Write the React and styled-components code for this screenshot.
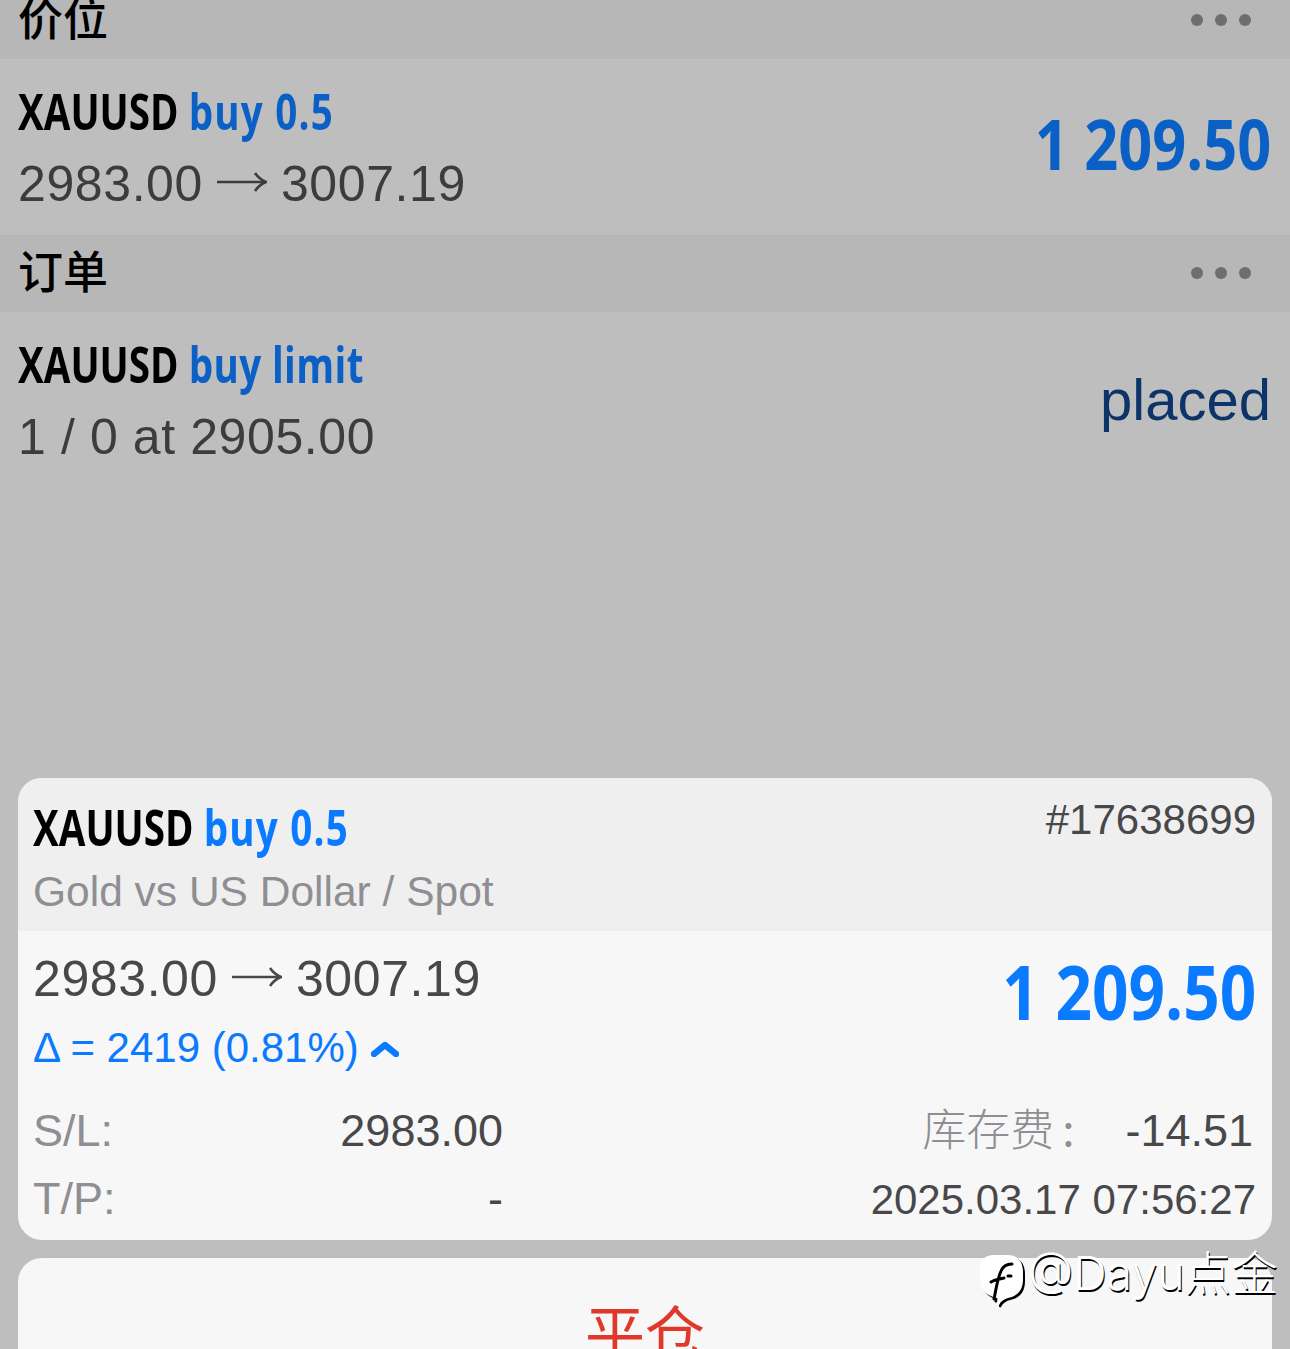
import React from "react";
import styled, { createGlobalStyle } from "styled-components";

const sans = `"Liberation Sans", Arial, "Noto Sans CJK SC", sans-serif`;
const condensed = `"Open Sans", "Noto Sans CJK SC", sans-serif`;

const GlobalStyle = createGlobalStyle`
  html, body {
    margin: 0;
    padding: 0;
    background: #bebebe;
  }
  * {
    box-sizing: border-box;
  }
`;

const Page = styled.div`
  width: 1290px;
  height: 1349px;
  position: relative;
  overflow: hidden;
  background: #bebebe;
  font-family: ${sans};
`;

const Sheet = styled.div`
  margin-top: -18px;
  display: flex;
  flex-direction: column;
`;

const SectionHead = styled.div`
  height: 77px;
  padding: 0 39px 0 18px;
  background: #b7b7b7;
  display: flex;
  align-items: center;
  justify-content: space-between;
`;

const SectionTitle = styled.div`
  font-family: "Noto Sans CJK SC", sans-serif;
  font-size: 45px;
  font-weight: 500;
  color: #000;
  margin-top: -8px;
`;

const Dots = styled.div`
  display: flex;
  gap: 12px;
  margin-top: -1px;
  i {
    width: 12px;
    height: 12px;
    border-radius: 50%;
    background: #6e6e6e;
  }
`;

const TradeRow = styled.div`
  height: ${(p) => p.$h}px;
  padding: 0 19px 0 18px;
  display: flex;
  justify-content: space-between;
  align-items: flex-start;
`;

const TradeInfo = styled.div`
  margin-top: 22px;
`;

const Name = styled.div`
  font-family: ${condensed};
  font-weight: 700;
  font-size: 51px;
  line-height: 58px;
  color: #000;
  white-space: nowrap;
  transform: scaleX(0.757);
  transform-origin: left center;
  span {
    letter-spacing: ${(p) => p.$track}px;
    color: ${(p) => p.$blue};
  }
`;

const Prices = styled.div`
  font-size: 50px;
  line-height: 58px;
  letter-spacing: 0.6px;
  color: ${(p) => p.$color};
  white-space: nowrap;
  margin-top: ${(p) => p.$top || 0}px;
`;

const ArrowMark = styled.svg`
  width: 50px;
  height: 20px;
  margin: 0 14px;
  vertical-align: 9px;
`;

const Arrow = () => (
  <ArrowMark viewBox="0 0 50 20">
    <path
      d="M0 10H48M38 1Q42 7 49 10Q42 13 38 19"
      fill="none"
      stroke="currentColor"
      strokeWidth="2.6"
    />
  </ArrowMark>
);

const Profit = styled.div`
  font-family: ${condensed};
  font-weight: 700;
  font-size: ${(p) => p.$size}px;
  color: ${(p) => p.$color};
  white-space: nowrap;
  line-height: 1;
  margin-top: ${(p) => p.$top}px;
  transform: scaleX(${(p) => p.$squeeze});
  transform-origin: right center;
`;

const Status = styled.div`
  font-size: 58px;
  line-height: 64px;
  margin-top: 56px;
  color: #0c3468;
`;

const Card = styled.div`
  margin: ${(p) => p.$top}px 18px 0;
  border-radius: 24px;
  overflow: hidden;
  background: #f7f7f7;
`;

const CardHead = styled.div`
  height: 153px;
  padding: 19px 16px 0 15px;
  background: #efefef;
  display: flex;
  justify-content: space-between;
  align-items: flex-start;
`;

const SubTitle = styled.div`
  font-size: 42.5px;
  line-height: 50px;
  margin-top: 12px;
  color: #8e8e93;
`;

const Ticket = styled.div`
  font-size: 42px;
  line-height: 44px;
  margin-top: 1px;
  color: #48484a;
`;

const CardBody = styled.div`
  height: 309px;
  padding: 19px 16px 0 15px;
  display: flex;
  flex-direction: column;
`;

const BodyTop = styled.div`
  display: flex;
  justify-content: space-between;
  align-items: flex-start;
`;

const Delta = styled.div`
  font-size: 42px;
  line-height: 46px;
  margin-top: 17px;
  color: #0a7aff;
  display: flex;
  align-items: center;
  gap: 12px;
`;

const DetailRows = styled.div`
  margin-top: 22px;
  display: grid;
  row-gap: 4px;
`;

const DetailRow = styled.div`
  display: grid;
  grid-template-columns: 470px 1fr;
  height: 68px;
  align-items: baseline;
  font-size: 45px;
  line-height: 68px;
`;

const DetailLeft = styled.div`
  display: flex;
  justify-content: space-between;
`;

const DetailRight = styled.div`
  display: flex;
  justify-content: flex-end;
  align-items: baseline;
  color: #48484a;
`;

const Label = styled.span`
  color: #8e8e93;
`;

const FeeLabel = styled.span`
  font-family: "Noto Sans CJK SC", sans-serif;
  font-size: 44px;
  font-weight: 300;
  color: #8e8e93;
  b {
    font-weight: 400;
    margin-left: 8px;
  }
`;

const FeeValue = styled.span`
  margin-left: 51px;
  padding-right: 3px;
`;

const Value = styled.span`
  color: #48484a;
`;

const Time = styled.span`
  font-size: 42px;
  color: #48484a;
`;

const CloseButton = styled.div`
  height: 200px;
  text-align: center;
  padding-top: 36px;
  font-family: "Noto Sans CJK SC", sans-serif;
  font-size: 60px;
  line-height: 72px;
  color: #e0392b;
`;

const Watermark = styled.div`
  position: absolute;
  left: 978px;
  top: 1244px;
  display: flex;
  align-items: flex-start;
  font-size: 46.5px;
  line-height: 58px;
  font-family: "Inter", "Noto Sans CJK SC", sans-serif;
  font-weight: 300;
  color: #fff;
  text-shadow: 1px 2px 0 #000;
  white-space: nowrap;
`;

const LogoMark = styled.svg`
  width: 50px;
  height: 58px;
  margin-top: 5px;
  filter: drop-shadow(2px 2px 0 #000);
`;

const WatermarkLogo = () => (
  <LogoMark viewBox="0 0 50 58">
    <path
      d="M16 6h14c10 0 15 7 15 17v7c0 11-5 17-15 19-4 1-7 3-9 7-1 1-2 0-2-1 0-3 1-5 0-6C8 47 2 40 2 30V20C2 11 7 6 16 6z"
      fill="#fff"
    />
    <path
      d="M13 33c3-2 8-3 13-4M16 50c2-9 3-19 7-28 2-5 6-7 11-7"
      fill="none"
      stroke="#000"
      strokeWidth="3"
      strokeLinecap="round"
    />
    <path d="M30 27h3" stroke="#000" strokeWidth="3" strokeLinecap="round" />
  </LogoMark>
);

const MoreDots = () => (
  <Dots>
    <i />
    <i />
    <i />
  </Dots>
);

const App = () => {
  return (
    <Page>
      <GlobalStyle />
      <Sheet>
        <SectionHead>
          <SectionTitle>价位</SectionTitle>
          <MoreDots />
        </SectionHead>
        <TradeRow $h={176}>
          <TradeInfo>
            <Name $blue="#0a60c4" $track={1.6}>
              XAUUSD <span>buy 0.5</span>
            </Name>
            <Prices $color="#3c3c3e" $top={16}>
              2983.00
              <Arrow />
              3007.19
            </Prices>
          </TradeInfo>
          <Profit $size={70} $color="#0a60c4" $top={49} $squeeze={0.85}>
            1 209.50
          </Profit>
        </TradeRow>
        <SectionHead>
          <SectionTitle>订单</SectionTitle>
          <MoreDots />
        </SectionHead>
        <TradeRow $h={466}>
          <TradeInfo>
            <Name $blue="#0a60c4" $track={0.5}>
              XAUUSD <span>buy limit</span>
            </Name>
            <Prices $color="#3c3c3e" $top={16}>
              1 / 0 at 2905.00
            </Prices>
          </TradeInfo>
          <Status>placed</Status>
        </TradeRow>
        <Card $top={0}>
          <CardHead>
            <div>
              <Name $blue="#0a7aff" $track={1.6}>
                XAUUSD <span>buy 0.5</span>
              </Name>
              <SubTitle>Gold vs US Dollar / Spot</SubTitle>
            </div>
            <Ticket>#17638699</Ticket>
          </CardHead>
          <CardBody>
            <BodyTop>
              <div>
                <Prices $color="#48484a">
                  2983.00
                  <Arrow />
                  3007.19
                </Prices>
                <Delta>
                  Δ = 2419 (0.81%)
                  <svg width="28" height="18" viewBox="0 0 28 18">
                    <path
                      d="M3 15 14 6l11 9"
                      fill="none"
                      stroke="#0a7aff"
                      strokeWidth="6.5"
                      strokeLinecap="round"
                      strokeLinejoin="round"
                    />
                  </svg>
                </Delta>
              </div>
              <Profit $size={76} $color="#0a7aff" $top={3} $squeeze={0.84}>
                1 209.50
              </Profit>
            </BodyTop>
            <DetailRows>
              <DetailRow>
                <DetailLeft>
                  <Label>S/L:</Label>
                  <Value>2983.00</Value>
                </DetailLeft>
                <DetailRight>
                  <FeeLabel>
                    库存费<b>:</b>
                  </FeeLabel>
                  <FeeValue>-14.51</FeeValue>
                </DetailRight>
              </DetailRow>
              <DetailRow>
                <DetailLeft>
                  <Label>T/P:</Label>
                  <Value>-</Value>
                </DetailLeft>
                <DetailRight>
                  <Time>2025.03.17 07:56:27</Time>
                </DetailRight>
              </DetailRow>
            </DetailRows>
          </CardBody>
        </Card>
        <Card $top={18}>
          <CloseButton>平仓</CloseButton>
        </Card>
      </Sheet>
      <Watermark>
        <WatermarkLogo />
        <span>@Dayu点金</span>
      </Watermark>
    </Page>
  );
};

export default App;
